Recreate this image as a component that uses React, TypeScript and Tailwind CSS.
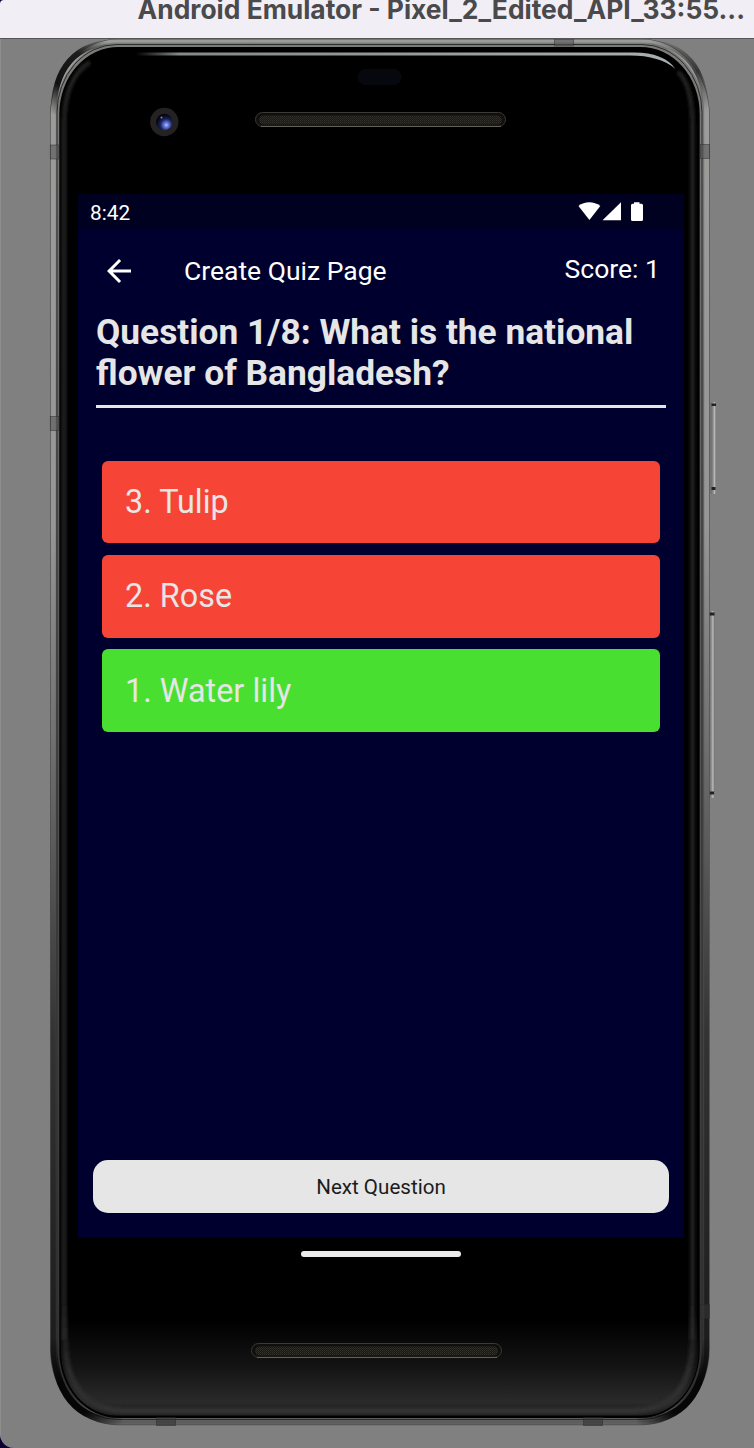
import React from "react";

const options = [
  { label: "3. Tulip", color: "bg-[#f64437]" },
  { label: "2. Rose", color: "bg-[#f64437]" },
  { label: "1. Water lily", color: "bg-[#49df31]" },
];

function Speaker({ x, y }: { x: number; y: number }) {
  return (
    <g>
      <rect x={x + 0.5} y={y + 0.5} width="250" height="14" rx="7" fill="#100f0c" stroke="#3a3a39" />
      <rect x={x + 4} y={y + 3.5} width="243" height="9" rx="4.5" fill="url(#mesh)" />
      <path d={`M${x + 6} ${y + 14.4}H${x + 246}`} stroke="#67665f" />
    </g>
  );
}

/* Handset body, drawn in window coordinates below the title bar. */
function PhoneBody() {
  return (
    <svg className="absolute left-0 top-0" width="754" height="1410" viewBox="0 38 754 1410" aria-hidden="true">
      <defs>
        <linearGradient id="metal" gradientUnits="userSpaceOnUse" x1="0" y1="39" x2="0" y2="1425">
          <stop offset="0" stopColor="#9b9d9b" />
          <stop offset="0.35" stopColor="#969696" />
          <stop offset="0.5" stopColor="#727272" />
          <stop offset="0.72" stopColor="#333" />
          <stop offset="0.985" stopColor="#181818" />
          <stop offset="0.995" stopColor="#505050" />
          <stop offset="1" stopColor="#666" />
        </linearGradient>
        <linearGradient id="metalInner" gradientUnits="userSpaceOnUse" x1="0" y1="39" x2="0" y2="1425">
          <stop offset="0" stopColor="#7c7c7a" />
          <stop offset="0.4" stopColor="#5c5c5c" />
          <stop offset="0.7" stopColor="#444" />
          <stop offset="0.98" stopColor="#303030" />
          <stop offset="1" stopColor="#6a6a6a" />
        </linearGradient>
        <linearGradient id="face" x1="0" y1="0" x2="0" y2="1">
          <stop offset="0" stopColor="#000" />
          <stop offset="0.93" stopColor="#000" />
          <stop offset="0.965" stopColor="#141414" />
          <stop offset="0.99" stopColor="#2a2a2a" />
          <stop offset="1" stopColor="#1c1c1c" />
        </linearGradient>
        <linearGradient id="shine" x1="0" y1="0" x2="1" y2="0">
          <stop offset="0" stopColor="#838a8a" stopOpacity="0" />
          <stop offset="0.08" stopColor="#838a8a" />
          <stop offset="1" stopColor="#a8b1b0" />
        </linearGradient>
        <linearGradient id="arcLeft" gradientUnits="userSpaceOnUse" x1="52" y1="114" x2="108" y2="42">
          <stop offset="0" stopColor="#111" stopOpacity="0" />
          <stop offset="0.3" stopColor="#111" />
          <stop offset="0.7" stopColor="#1c1c1c" />
          <stop offset="1" stopColor="#222" stopOpacity="0" />
        </linearGradient>
        <linearGradient id="arcRight" gradientUnits="userSpaceOnUse" x1="650" y1="40" x2="708" y2="110">
          <stop offset="0" stopColor="#222" stopOpacity="0" />
          <stop offset="0.6" stopColor="#181818" stopOpacity=".7" />
          <stop offset="1" stopColor="#222" stopOpacity="0" />
        </linearGradient>
        <linearGradient id="arcBottomLeft" gradientUnits="userSpaceOnUse" x1="50" y1="1340" x2="122" y2="1424">
          <stop offset="0" stopColor="#060606" stopOpacity="0" />
          <stop offset="0.35" stopColor="#060606" />
          <stop offset="0.7" stopColor="#060606" />
          <stop offset="1" stopColor="#060606" stopOpacity="0" />
        </linearGradient>
        <linearGradient id="arcBottomRight" gradientUnits="userSpaceOnUse" x1="709" y1="1340" x2="637" y2="1424">
          <stop offset="0" stopColor="#060606" stopOpacity="0" />
          <stop offset="0.35" stopColor="#060606" />
          <stop offset="0.7" stopColor="#060606" />
          <stop offset="1" stopColor="#060606" stopOpacity="0" />
        </linearGradient>
        <linearGradient id="bottomGlow" gradientUnits="userSpaceOnUse" x1="0" y1="1300" x2="0" y2="1412">
          <stop offset="0" stopColor="#303030" stopOpacity="0" />
          <stop offset="0.7" stopColor="#2c2c2c" />
          <stop offset="1" stopColor="#303030" />
        </linearGradient>
        <linearGradient id="volume" x1="0" y1="0" x2="1" y2="0">
          <stop offset="0" stopColor="#666" />
          <stop offset="0.45" stopColor="#888" />
          <stop offset="0.75" stopColor="#bbb" />
          <stop offset="1" stopColor="#777" />
        </linearGradient>
        <radialGradient id="lens" cx=".62" cy=".68" r=".6">
          <stop offset="0" stopColor="#b9c4ff" />
          <stop offset="0.2" stopColor="#6d80e0" />
          <stop offset="0.6" stopColor="#18225e" />
          <stop offset="1" stopColor="#05060f" />
        </radialGradient>
        <pattern id="mesh" width="2" height="2" patternUnits="userSpaceOnUse">
          <rect width="2" height="2" fill="#191812" />
          <rect width="1" height="1" fill="#35332d" />
          <rect x="1" y="1" width="1" height="1" fill="#2a2923" />
        </pattern>
        <filter id="soft" x="-5%" y="-5%" width="110%" height="110%">
          <feGaussianBlur stdDeviation="1.6" />
        </filter>
      </defs>

      <g>
        <rect x="710.5" y="402" width="5.5" height="92" rx="1.5" fill="url(#volume)" />
        <rect x="711.5" y="403.5" width="4.5" height="2.5" fill="#222" />
        <rect x="711.5" y="487" width="4" height="3" fill="#222" />
        <rect x="708.5" y="611" width="6" height="187" rx="1.5" fill="url(#volume)" />
        <rect x="709.5" y="612.5" width="5" height="3" fill="#222" />
        <rect x="709.5" y="791.5" width="4.5" height="3" fill="#222" />
      </g>

      <rect x="50" y="39" width="659.7" height="1386.3" rx="67" ry="76" fill="#4c4c4c" />
      <rect x="50.7" y="39.5" width="658.4" height="1385" rx="66.5" ry="75.5" fill="url(#metal)" />
      <rect x="55.8" y="42.5" width="648.4" height="1378.5" rx="62" ry="71" fill="url(#metalInner)" />
      <rect x="57" y="44.5" width="645" height="1375" rx="60" ry="68" fill="none" stroke="#2c2c2c" strokeWidth="1" />

      <path d="M53.5 114C53.5 68 76 42.5 116 42.5" fill="none" stroke="url(#arcLeft)" strokeWidth="6" />
      <path d="M644 42.5C684 42.5 706 68 706 114" fill="none" stroke="url(#arcRight)" strokeWidth="6" />
      <path d="M53.5 1340C53.5 1392 76 1421.5 122 1421.5" fill="none" stroke="url(#arcBottomLeft)" strokeWidth="7" />
      <path d="M706 1340C706 1392 683 1421.5 637 1421.5" fill="none" stroke="url(#arcBottomRight)" strokeWidth="7" />

      <rect x="59.3" y="47" width="640.4" height="1371" rx="59" ry="67" fill="#000" />
      <rect x="61" y="50" width="637.5" height="1365.5" rx="56" ry="64" fill="url(#face)" />
      <path
        d="M64 1340V125Q64 78 90 62M692.5 1340V125Q692 84 678 72"
        fill="none" stroke="#202020" strokeWidth="4.5" filter="url(#soft)"
      />
      <path
        d="M65 1300V1340Q66 1409 124 1411H634Q692 1409 692.5 1340V1300"
        fill="none" stroke="url(#bottomGlow)" strokeWidth="6" filter="url(#soft)"
      />

      <path d="M136 52.5H634Q664 52.5 675.5 69Q660 55.5 630 55.5H136Z" fill="url(#shine)" />

      <g fill="#555" fillOpacity=".6" stroke="#292929" strokeOpacity=".6" strokeWidth=".8">
        <rect x="50.3" y="145" width="8.5" height="14" />
        <rect x="50.3" y="416.5" width="8.5" height="14" />
        <rect x="700.5" y="144.5" width="9" height="14" />
        <rect x="554.5" y="39" width="19" height="7" />
        <rect x="700.5" y="1304.5" width="9" height="14" fill="#333" />
        <rect x="156.5" y="1417.5" width="19" height="8" fill="#333" />
        <rect x="583.5" y="1417.5" width="19" height="8" fill="#333" />
      </g>

      <rect x="357.5" y="69" width="44" height="16" rx="8" fill="#06080d" />
      <circle cx="164.3" cy="122" r="14.2" fill="#242222" />
      <circle cx="164.3" cy="122" r="8.3" fill="url(#lens)" />
      <circle cx="161.5" cy="117.5" r="1" fill="#718be5" />
      <Speaker x={255} y={112} />
      <Speaker x={251} y={1343} />
    </svg>
  );
}

function StatusIcons() {
  return (
    <svg width="66" height="20" viewBox="578 202 66 20" fill="#fff" aria-hidden="true">
      <path d="M578.5 206C584.5 201 594 201 600.3 206L589.4 220Z" />
      <path d="M621 202.3V220.3H602.5Z" />
      <path d="M634 202.2H639.5V203.8H641.5Q643 203.8 643 205.3V219.5Q643 221 641.5 221H632.5Q631 221 631 219.5V205.3Q631 203.8 632.5 203.8H634Z" />
    </svg>
  );
}

export default function App() {
  return (
    <div className="flex h-[1448px] w-[754px] flex-col overflow-hidden bg-[#0d0030]">
      <header className="relative z-10 flex h-[39px] shrink-0 justify-end overflow-hidden rounded-tl-[4px] border-b border-[#555] bg-[#f1eef5] pr-[9px]">
        <h1 className="-mt-[8px] whitespace-nowrap font-[Inter,sans-serif] text-[26.4px] font-bold leading-[35px] text-[#4a494b]">
          Android Emulator - Pixel_2_Edited_API_33:55...
        </h1>
      </header>

      <main className="relative -mt-px h-[1410px] shrink-0 overflow-hidden rounded-bl-[14px] border-l border-[#8d8d8d] bg-[#808080]">
        <div className="absolute -left-px top-0">
          <PhoneBody />
        </div>
        <div className="relative ml-[77px] flex w-[606px] flex-col pt-[156px] font-[Roboto,sans-serif]">
          <section className="flex h-[1043px] flex-col bg-[#00002f]">
            <div className="flex h-[35px] shrink-0 items-center justify-between bg-[#000021] pl-3 pr-10 text-white">
              <span className="pt-[3px] text-[20.8px] leading-6">8:42</span>
              <StatusIcons />
            </div>

            <div className="flex h-[83px] shrink-0 items-center pl-[23px] pr-[24px] text-white">
              <svg width="36" height="36" viewBox="0 0 24 24" fill="#fff" aria-label="Back">
                <path d="M20 11H7.83l5.59-5.59L12 4l-8 8 8 8 1.41-1.41L7.83 13H20v-2z" />
              </svg>
              <h2 className="ml-[47px] text-[26.5px] leading-8">Create Quiz Page</h2>
              <span className="ml-auto pb-[3px] text-[26.5px] leading-8">Score: 1</span>
            </div>

            <div className="mx-[18px] h-[96px] shrink-0 border-b-[3px] border-[#e6e6e6] text-[35.3px] font-bold leading-[41px] text-[#e6e6e6]">
              Question 1/8: What is the national flower of Bangladesh?
            </div>

            <div className="mt-[53px] flex flex-col gap-[11.8px] px-[23.6px]">
              {options.map((o) => (
                <div
                  key={o.label}
                  className={`flex h-[82.4px] items-center rounded-[6px] pl-[23.4px] text-[32.4px] leading-10 text-[#e6e6e6] ${o.color}`}
                >
                  {o.label}
                </div>
              ))}
            </div>

            <button className="mx-[15px] mb-6 mt-auto h-[53px] shrink-0 rounded-[15px] bg-[#e6e6e6] pt-[2px] text-[20.6px] text-[#1c1c1c]">
              Next Question
            </button>
          </section>
          <div className="mt-[14px] h-[6px] w-[160px] self-center rounded-full bg-[#ececec]" />
        </div>
      </main>
    </div>
  );
}
